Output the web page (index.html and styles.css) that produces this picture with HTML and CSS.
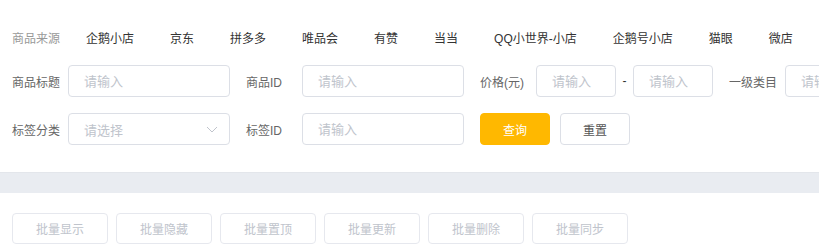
FILE: index.html
```html
<!DOCTYPE html>
<html lang="zh-CN">
<head>
<meta charset="utf-8">
<title>商品筛选</title>
<link rel="stylesheet" href="styles.css">
</head>
<body>
<div class="page">
  <section class="filter">
    <div class="row row-source">
      <span class="label">商品来源</span>
      <ul class="sources">
        <li>企鹅小店</li>
        <li>京东</li>
        <li>拼多多</li>
        <li>唯品会</li>
        <li>有赞</li>
        <li>当当</li>
        <li>QQ小世界-小店</li>
        <li>企鹅号小店</li>
        <li>猫眼</li>
        <li>微店</li>
      </ul>
    </div>
    <div class="row">
      <div class="field">
        <span class="label">商品标题</span>
        <input class="input" type="text" placeholder="请输入">
      </div>
      <div class="field">
        <span class="label">商品ID</span>
        <input class="input" type="text" placeholder="请输入">
      </div>
      <div class="field">
        <span class="label">价格(元)</span>
        <input class="input input-sm" type="text" placeholder="请输入">
        <span class="dash">-</span>
        <input class="input input-sm" type="text" placeholder="请输入">
      </div>
      <div class="field">
        <span class="label">一级类目</span>
        <input class="input" type="text" placeholder="请输入">
      </div>
    </div>
    <div class="row">
      <div class="field">
        <span class="label">标签分类</span>
        <div class="select">
          <span class="placeholder">请选择</span>
          <svg class="arrow" width="12" height="7" viewBox="0 0 12 7"><path d="M1 1l5 5 5-5" fill="none" stroke="#c0c4cc" stroke-width="1"/></svg>
        </div>
      </div>
      <div class="field">
        <span class="label">标签ID</span>
        <input class="input" type="text" placeholder="请输入">
      </div>
      <div class="actions">
        <button class="btn btn-primary">查询</button>
        <button class="btn">重置</button>
      </div>
    </div>
  </section>
  <div class="divider"></div>
  <section class="batch">
    <button class="btn btn-batch">批量显示</button>
    <button class="btn btn-batch">批量隐藏</button>
    <button class="btn btn-batch">批量置顶</button>
    <button class="btn btn-batch">批量更新</button>
    <button class="btn btn-batch">批量删除</button>
    <button class="btn btn-batch">批量同步</button>
  </section>
</div>
</body>
</html>
```
FILE: styles.css
```css
html, body {
  margin: 0;
  padding: 0;
  background: #fff;
}
body {
  font-family: "Liberation Sans", "Noto Sans CJK SC", sans-serif;
  font-size: 12px;
  color: #333;
  overflow: hidden;
}
.page {
  width: 819px;
  overflow: hidden;
}
.filter {
  padding: 21px 0 27px 12px;
}
.row {
  display: flex;
  align-items: center;
  flex-wrap: nowrap;
  height: 32px;
  margin-bottom: 16px;
  white-space: nowrap;
}
.row:last-child {
  margin-bottom: 0;
}
.row-source {
  margin-bottom: 12px;
}
.label {
  color: #666;
  width: 48px;
  flex: none;
  margin-right: 8px;
}
.row-source .label {
  color: #999;
  margin-right: 26px;
}
.sources {
  display: flex;
  list-style: none;
  margin: 0;
  padding: 0;
  gap: 36px;
}
.sources li {
  color: #333;
}
.field {
  display: flex;
  align-items: center;
  flex: none;
  margin-right: 16px;
}
.input, .select {
  box-sizing: border-box;
  width: 162px;
  height: 32px;
  border: 1px solid #dcdfe6;
  border-radius: 4px;
  padding: 0 15px;
  font-family: inherit;
  font-size: 13px;
  color: #333;
  background: #fff;
  outline: none;
}
.input::placeholder, .placeholder {
  color: #c0c4cc;
}
.input-sm {
  width: 80px;
}
.dash {
  color: #333;
  width: 17px;
  text-align: center;
}
.select {
  display: flex;
  align-items: center;
  justify-content: space-between;
  padding-right: 11px;
}
.actions {
  display: flex;
  gap: 10px;
}
.btn {
  box-sizing: border-box;
  width: 70px;
  height: 32px;
  border: 1px solid #dcdfe6;
  border-radius: 4px;
  background: #fff;
  color: #555;
  font: inherit;
  padding: 0;
  cursor: pointer;
}
.btn-primary {
  background: #ffb800;
  border-color: #ffb800;
  color: #fff;
}
.divider {
  height: 21px;
  background: #e9ecf1;
  border-top: 1px solid #e3e6eb;
  box-sizing: border-box;
}
.batch {
  display: flex;
  gap: 8px;
  padding: 20px 12px 0;
}
.btn-batch {
  width: 96px;
  height: 31px;
  border-color: #e6e8ee;
  color: #c0c4cc;
}
```
